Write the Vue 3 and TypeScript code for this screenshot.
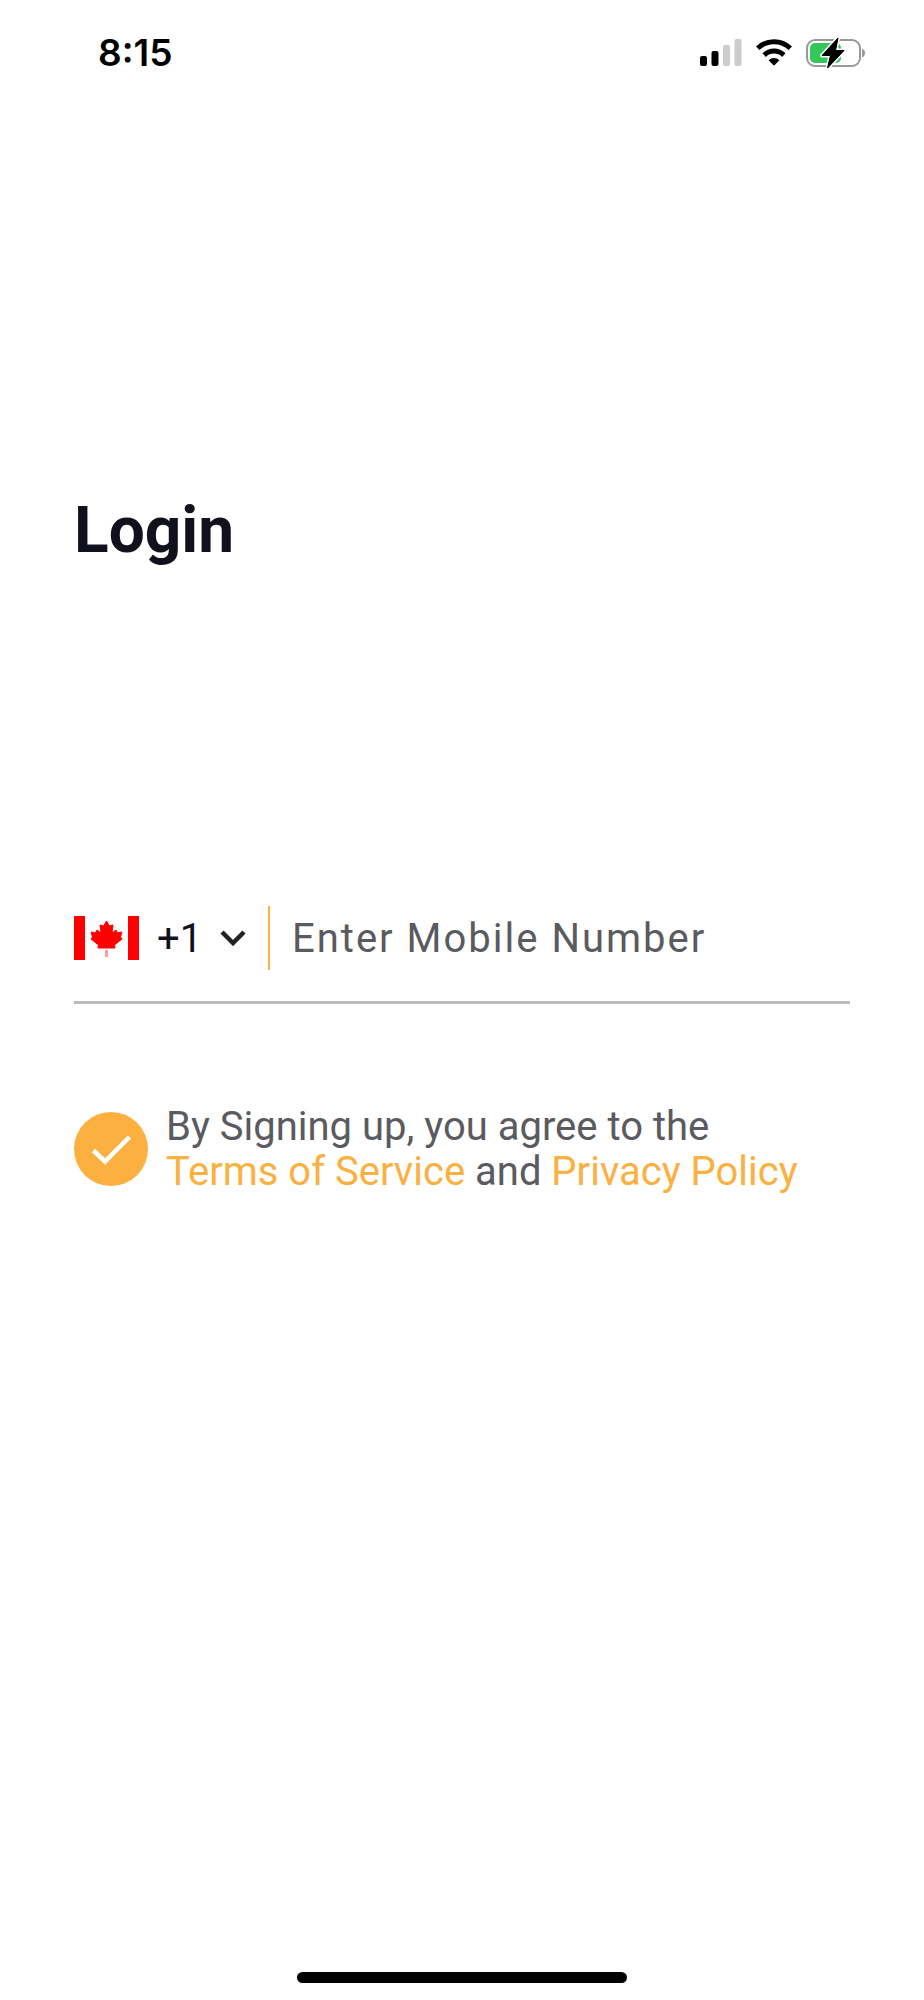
<script setup lang="ts">
import { ref } from 'vue'

const countryCode = ref<string>('+1')
const mobile = ref<string>('')
const agreed = ref<boolean>(true)
</script>

<template>
  <div class="screen">
    <header class="status">
      <time class="clock">8:15</time>
      <div class="indicators">
        <svg class="signal" viewBox="0 0 42 28" role="img" aria-label="Signal strength">
          <rect x="0" y="17" width="7" height="10" rx="2" fill="#000" />
          <rect x="11.5" y="12" width="7" height="15" rx="2" fill="#000" />
          <rect x="23" y="6" width="7" height="21" rx="2" fill="#ccc" />
          <rect x="34.5" y="0" width="7" height="27" rx="2" fill="#ccc" />
        </svg>
        <svg class="wifi" viewBox="0 0 36 28" role="img" aria-label="Wi-Fi">
          <g fill="none" stroke="#000" stroke-width="5">
            <path d="M1.7 9.3A23.4 23.4 0 0 1 34.3 9.3" />
            <path d="M8.2 16.1A14 14 0 0 1 27.8 16.1" />
          </g>
          <path d="M12.6 21.2A7.8 7.8 0 0 1 23.4 21.2L18.7 26.1Q18 26.8 17.3 26.1Z" fill="#000" />
        </svg>
        <svg class="battery" viewBox="0 0 60 30" role="img" aria-label="Battery charging">
          <rect x="1" y="2" width="53" height="26" rx="8" fill="none" stroke="#999" stroke-width="2" />
          <path d="M56 10.5Q59 12 59 15Q59 18 56 19.5Z" fill="#999" />
          <rect x="4" y="5" width="31" height="20" rx="5" fill="#34c759" />
          <path d="M32 0L16 17.5H24.5L21.5 30L38 12.5H29.5Z" fill="#000" stroke="#fff" stroke-width="4" stroke-linejoin="round" paint-order="stroke" />
          <path d="M32 0L16 17.5H24.5L21.5 30L38 12.5H29.5Z" fill="#000" stroke="#000" stroke-width="1" stroke-linejoin="round" />
        </svg>
      </div>
    </header>

    <main class="content">
      <h1>Login</h1>
      <form @submit.prevent>
        <div class="phone">
          <svg class="flag" viewBox="0 0 65 44" role="img" aria-label="Canada">
            <rect width="65" height="44" fill="#fff" />
            <path d="M0 0H11V44H0ZM54 0H65V44H54Z" fill="#f00" />
            <path d="M32.5 5L35.5 10L39 9L38 17L42 14L43.5 17L48 16L46.5 21L48 23L40.5 29L41 32H24L24.5 29L17 23L18.5 21L17 16L21.5 17L23 14L27 17L26 9L29.5 10Z" fill="#f00" stroke="#f00" stroke-width="1" stroke-linejoin="round" />
            <rect x="31" y="34" width="3" height="7" fill="#ff9c9c" />
          </svg>
          <div class="code">
            <select v-model="countryCode" aria-label="Country code">
              <option value="+1">+1</option>
            </select>
            <svg class="chevron" viewBox="0 0 26 16" aria-hidden="true">
              <path d="M2 2L13 13L24 2" fill="none" stroke="#222" stroke-width="4.5" />
            </svg>
          </div>
          <input v-model="mobile" class="number" type="tel" placeholder="Enter Mobile Number" aria-label="Mobile number" />
        </div>

        <div class="terms">
          <span class="tick">
            <input id="agree" v-model="agreed" type="checkbox" />
            <svg v-if="agreed" viewBox="0 0 74 74" aria-hidden="true">
              <path d="M19.5 38.5L31 49.5L55.5 25" fill="none" stroke="#fff" stroke-width="4.5" />
            </svg>
          </span>
          <p>
            <label for="agree">By Signing up, you agree to the</label><br />
            <a href="#terms">Terms of Service</a> and <a href="#privacy">Privacy Policy</a>
          </p>
        </div>
      </form>
    </main>

    <div class="home"></div>
  </div>
</template>

<style>
body {
  margin: 0;
  background: #fff;
}
</style>

<style scoped>
.screen {
  box-sizing: border-box;
  min-height: 100vh;
  display: flex;
  flex-direction: column;
  background: #fff;
  color: #5a5a60;
  font-family: Roboto, "Liberation Sans", sans-serif;
  font-size: 40px;
}
.status {
  display: flex;
  justify-content: space-between;
  align-items: center;
  height: 106px;
  padding: 0 58px 0 98px;
}
.clock {
  font: 600 37px/44px Inter, sans-serif;
  color: #000;
}
.indicators {
  display: flex;
  align-items: center;
  gap: 14px;
}
.signal {
  width: 42px;
  height: 28px;
}
.wifi {
  width: 36px;
  height: 28px;
}
.battery {
  width: 60px;
  height: 30px;
}
.content {
  padding: 387px 74px 0;
}
h1 {
  margin: 0;
  font-size: 64px;
  line-height: 76px;
  font-weight: 700;
  color: #11111d;
}
.phone {
  display: flex;
  align-items: center;
  height: 64px;
  margin-top: 337px;
  padding-bottom: 31px;
  border-bottom: 3px solid #bbb;
}
.flag {
  flex: none;
  width: 65px;
  height: 44px;
}
.code {
  display: grid;
  align-items: center;
  width: 89px;
  margin: 0 22px 0 18px;
}
select,
.chevron {
  grid-area: 1 / 1;
}
select {
  appearance: none;
  width: 100%;
  height: 64px;
  padding: 0;
  border: 0;
  background: transparent;
  font: inherit;
  color: #11111d;
}
.chevron {
  justify-self: end;
  width: 26px;
  height: 16px;
  pointer-events: none;
}
.number {
  box-sizing: border-box;
  flex: 1;
  min-width: 0;
  height: 64px;
  padding: 0 0 0 22px;
  border: 0;
  border-left: 2px solid #fbb03f;
  border-radius: 0;
  outline: 0;
  background: transparent;
  font: inherit;
  letter-spacing: 2px;
  color: #11111d;
}
.number::placeholder {
  color: #5a5a60;
  opacity: 1;
}
.terms {
  display: flex;
  align-items: center;
  gap: 18px;
  margin-top: 100px;
}
.tick {
  display: grid;
  flex: none;
  width: 74px;
  height: 74px;
}
.tick input,
.tick svg {
  grid-area: 1 / 1;
}
.tick input {
  appearance: none;
  width: 74px;
  height: 74px;
  margin: 0;
  border-radius: 50%;
  background: #fbb03f;
}
.tick svg {
  pointer-events: none;
}
p {
  margin: 0;
  line-height: 45px;
}
a {
  color: #fbb03f;
  text-decoration: none;
}
.home {
  width: 330px;
  height: 11px;
  margin: auto auto 17px;
  border-radius: 6px;
  background: #000;
}
</style>
